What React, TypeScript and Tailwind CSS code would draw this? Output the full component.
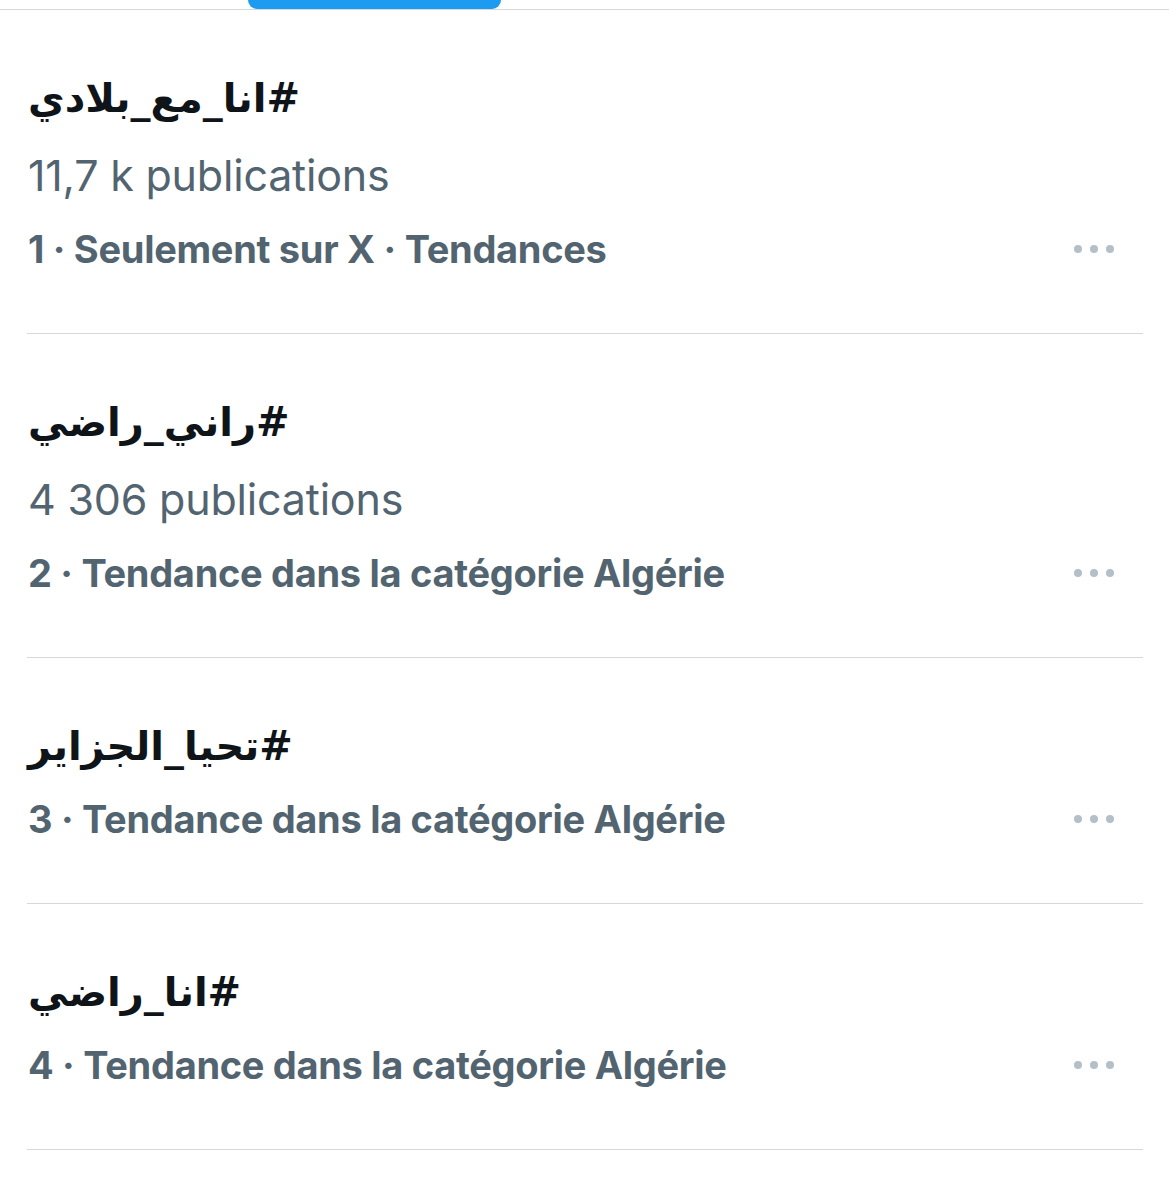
import React from "react";

type Trend = {
  tag: string;
  count?: string;
  meta: string;
};

const trends: Trend[] = [
  { tag: "#انا_مع_بلادي", count: "11,7 k publications", meta: "1 · Seulement sur X · Tendances" },
  { tag: "#راني_راضي", count: "4 306 publications", meta: "2 · Tendance dans la catégorie Algérie" },
  { tag: "#تحيا_الجزاير", meta: "3 · Tendance dans la catégorie Algérie" },
  { tag: "#انا_راضي", meta: "4 · Tendance dans la catégorie Algérie" },
];

function Dots() {
  return (
    <div className="flex items-center gap-[8px]">
      <span className="block h-[8px] w-[8px] rounded-full bg-[#b3c0c8]" />
      <span className="block h-[8px] w-[8px] rounded-full bg-[#b3c0c8]" />
      <span className="block h-[8px] w-[8px] rounded-full bg-[#b3c0c8]" />
    </div>
  );
}

export default function App() {
  return (
    <div
      className="min-h-[1186px] w-full bg-white"
      style={{ fontFamily: "Inter, 'Liberation Sans', 'DejaVu Sans', sans-serif" }}
    >
      <div className="relative h-[10px] border-b border-[#d5d9db]">
        <div className="absolute left-[248px] top-0 h-[9px] w-[253px] rounded-b-full bg-[#1d9bf0]" />
      </div>
      <div>
        {trends.map((t, i) => (
          <div
            key={i}
            className="ml-[27px] mr-[26px] border-b border-[#d5d9db] pt-[50px] pb-[49px]"
          >
            <div className="h-[76px] flex items-center pl-[1px]">
              <span
                dir="rtl"
                className="inline-block text-[40px] font-bold text-[#0f1419]"
                style={{ fontFamily: "'DejaVu Sans', 'Noto Sans', sans-serif" }}
              >
                {t.tag}
              </span>
            </div>
            {t.count && (
              <div className="h-[78px] flex items-center pl-[1px] text-[43px] text-[#536471] tracking-[-0.2px]">
                {t.count}
              </div>
            )}
            <div className="h-[70px] flex items-center justify-between pl-[1px] pr-[29px]">
              <span className="text-[38px] font-bold text-[#536471] tracking-[-0.3px]">{t.meta}</span>
              <Dots />
            </div>
          </div>
        ))}
      </div>
    </div>
  );
}
